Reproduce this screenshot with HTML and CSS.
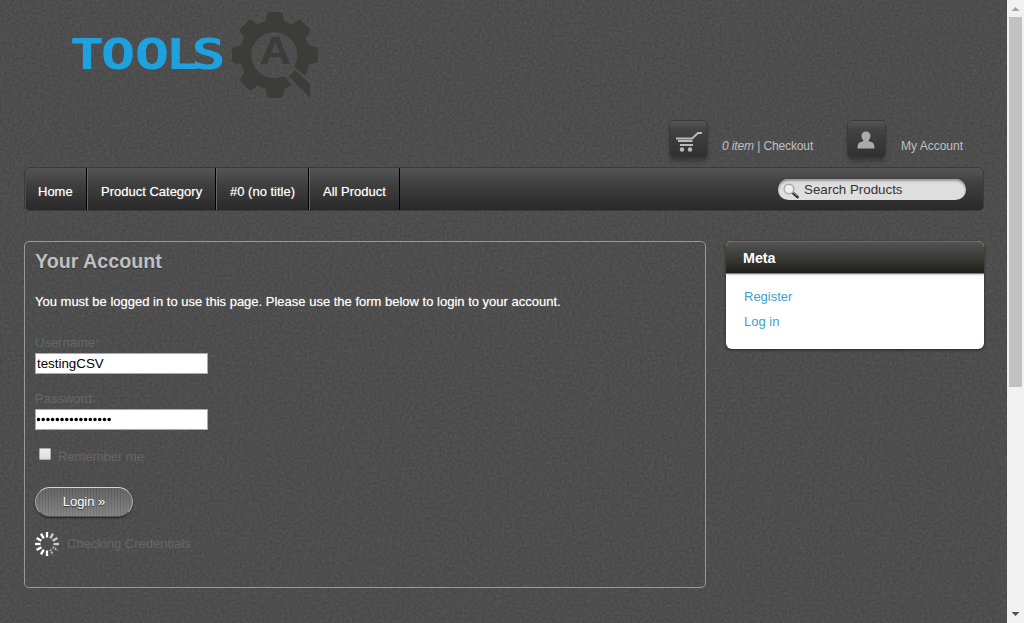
FILE: index.html
```html
<!DOCTYPE html>
<html lang="en">
<head>
<meta charset="utf-8">
<title>Your Account</title>
<link rel="stylesheet" href="styles.css">
</head>
<body>
<svg class="grain" width="1007" height="623" aria-hidden="true">
  <filter id="grain" x="0" y="0" width="100%" height="100%" color-interpolation-filters="sRGB">
    <feTurbulence type="fractalNoise" baseFrequency="0.4" numOctaves="2" seed="4"/>
    <feColorMatrix values="0.09 0 0 0 0.26  0.09 0 0 0 0.26  0.09 0 0 0 0.26  0 0 0 0 1"/>
  </filter>
  <rect width="1007" height="623" filter="url(#grain)"/>
</svg>
<div class="page">
  <header class="header">
    <svg class="logo" width="260" height="100" viewBox="64 4 260 100">
      <text class="logo-word" transform="translate(69.7 69) scale(1.35 1)" x="0 23 48.1 70.800 90" y="0">TOOLS</text>
      <g fill="#3c3c39">
        <path id="tooth" d="M265 24 L267 14 Q268 12 270 12 H280 Q282 12 283 14 L285 24Z"/>
        <use href="#tooth" transform="rotate(45 275 55)"/>
        <use href="#tooth" transform="rotate(90 275 55)"/>
        <use href="#tooth" transform="rotate(180 275 55)"/>
        <use href="#tooth" transform="rotate(225 275 55)"/>
        <use href="#tooth" transform="rotate(270 275 55)"/>
        <use href="#tooth" transform="rotate(315 275 55)"/>
        <path d="M309 62 L306 76 L294 67 A23 23 0 1 0 284 76 L292 85 Q284 90 275 90 A35 35 0 1 1 309 62Z"/>
        <path d="M295 70 L310 84 V98 L289 76Z"/>
        <text class="logo-mark" transform="translate(259.5 64) scale(1.15 1)">A</text>
      </g>
    </svg>
    <div class="tools">
      <a class="tool cart"><span class="tile"><svg width="36" height="36" viewBox="0 0 36 36"><path d="M6 17.500H22L28 12H32" fill="none" stroke="#b9b9b9" stroke-width="2"/><path d="M8 20H22.500M10 24H23" fill="none" stroke="#b9b9b9" stroke-width="2"/><circle cx="12" cy="28.500" r="2.200" fill="#b9b9b9"/><circle cx="20" cy="28.500" r="2.200" fill="#b9b9b9"/></svg></span><span class="tool-text"><em>0 item</em> | Checkout</span></a>
      <a class="tool account"><span class="tile"><svg width="36" height="36" viewBox="0 0 36 36"><path fill="#aaa" d="M18 10.500C21 10.500 22.500 12.500 22.500 15C22.500 18 20.500 19 20.500 20L24.500 21.500Q26.500 22.500 26.500 27.500H9.500Q9.500 22.500 11.500 21.500L15.500 20C15.500 19 13.500 18 13.500 15C13.500 12.500 15 10.500 18 10.500Z"/></svg></span><span class="tool-text">My Account</span></a>
    </div>
  </header>
  <nav class="nav">
    <a class="item home">Home</a><a class="item category">Product Category</a><a class="item untitled">#0 (no title)</a><a class="item all">All Product</a>
    <div class="search"><svg width="18" height="18" viewBox="0 0 18 18"><path d="M10 10L14.500 14" stroke="#333" stroke-width="3" stroke-linecap="round"/><path d="M10 9L14.500 13" stroke="#999"/><circle cx="6" cy="6" r="4.800" fill="#eee" stroke="#aaa" stroke-width="1.500"/></svg><span>Search Products</span></div>
  </nav>
  <div class="columns">
    <main class="panel">
      <h1>Your Account</h1>
      <p class="intro">You must be logged in to use this page. Please use the form below to login to your account.</p>
      <label class="label">Username:</label>
      <div class="field">testingCSV</div>
      <label class="label second">Password:</label>
      <div class="field dots"><svg width="90" height="19" viewBox="0 0 90 19"><path d="M2.500 9.500H74" stroke="#000" stroke-width="3.600" stroke-linecap="round" stroke-dasharray="0 4.710"/></svg></div>
      <div class="remember"><span class="checkbox"></span><span>Remember me</span></div>
      <a class="login">Login »</a>
      <div class="checking">
        <svg width="26" height="26" viewBox="-13 -13 26 26">
          <defs><path id="ray" d="M0-6.500V-12"/></defs>
          <g stroke="#fff" stroke-width="2.300">
            <use href="#ray"/><use href="#ray" transform="rotate(180)"/><use href="#ray" transform="rotate(210)"/><use href="#ray" transform="rotate(240)"/><use href="#ray" transform="rotate(270)"/><use href="#ray" transform="rotate(300)"/><use href="#ray" transform="rotate(330)"/>
          </g>
          <g stroke="#ccc" stroke-width="2.300"><use href="#ray" transform="rotate(30)"/><use href="#ray" transform="rotate(60)"/><use href="#ray" transform="rotate(90)"/></g>
          <g stroke="#bbb" stroke-width="2.300" stroke-dasharray="1.500 1"><use href="#ray" transform="rotate(120)"/><use href="#ray" transform="rotate(150)"/></g>
        </svg><span>Checking Credentials</span>
      </div>
    </main>
    <aside class="widget">
      <h2>Meta</h2>
      <ul><li>Register</li><li>Log in</li></ul>
    </aside>
  </div>
</div>
<div class="scrollbar">
  <svg width="17" height="17"><path d="M4.500 11L8.500 7L12.500 11Z" fill="#a3a3a3"/></svg>
  <div class="thumb"></div>
  <svg width="17" height="17"><path d="M4.500 6L8.500 10L12.500 6Z" fill="#505050"/></svg>
</div>
</body>
</html>
```

FILE: styles.css
```css
* { box-sizing: border-box; }
body {
  margin: 0;
  height: 623px;
  overflow: hidden;
  display: flex;
  background: #4d4d4d;
  color: #666;
  font: 13px/18px "Liberation Sans", Arial, sans-serif;
}
.grain { position: absolute; left: 0; top: 0; z-index: -1; }
.page { width: 1007px; padding: 0 23px 0 24px; }

.header { height: 167px; display: flex; flex-direction: column; }
.logo { margin: 4px 0 0 40px; flex: none; }
.logo-word { font: bold 42.500px "DejaVu Sans Mono", monospace; fill: #1ea2df; }
.logo-mark { font: bold 38px "Liberation Sans", Arial, sans-serif; }
.tools { display: flex; margin: 17px 0 0 646px; }
.tool { display: flex; color: #c0c0c0; font-size: 12px; }
.cart { width: 178px; }
.tile {
  width: 37px;
  height: 36px;
  flex: none;
  border-radius: 4px;
  background: linear-gradient(#555, #424242 25%, #303030);
  box-shadow: 0 0 0 1px #393939, 0 4px 4px rgba(0, 0, 0, .3);
}
.tile svg { display: block; }
.cart .tool-text { margin: 16px 0 0 15px; letter-spacing: -.12px; }
.account .tool-text { margin: 16px 0 0 16px; }

.nav {
  width: 960px;
  height: 44px;
  display: flex;
  border: 1px solid #3b3b3b;
  border-radius: 5px;
  background: linear-gradient(#555, #414141 35%, #292929);
  color: #fff;
}
.item {
  border-left: 1px solid #666;
  border-right: 1px solid #000;
  padding: 15px 0 0 13px;
  white-space: nowrap;
  text-shadow: 0 0 1px rgba(255, 255, 255, .5);
}
.home { width: 62px; padding-left: 12px; border-left-color: #4a4a4a; border-radius: 4px 0 0 4px; }
.category { width: 129px; }
.untitled { width: 93px; }
.all { width: 91px; }
.search {
  margin: 11px 17px 0 auto;
  width: 188px;
  height: 21px;
  border-radius: 11px;
  background: #dedede;
  box-shadow: inset 0 2px 2px #999;
  display: flex;
  align-items: center;
  padding-left: 5px;
  gap: 3px;
  color: #333;
  font-size: 13.333px;
}
.search svg { margin-top: 4px; }

.columns { display: flex; align-items: flex-start; gap: 20px; margin-top: 30px; }
.panel { width: 682px; height: 347px; border: 1px solid #999; border-radius: 5px; padding: 7px 10px; }
h1 { margin: 0; font-size: 19.700px; line-height: 24px; color: #c0c0c0; text-shadow: 0 1px 1px #333; }
.intro { margin: 20px 0 0; color: #fff; text-shadow: 0 0 1px rgba(255, 255, 255, .5); }
.label { display: block; margin-top: 23px; height: 19px; }
.second { margin-top: 16px; }
.field {
  width: 173px;
  height: 21px;
  border: 1px solid #aaa;
  background: #fff;
  color: #000;
  padding: 1px 1px;
  font-size: 13.333px;
}
.dots { padding: 0; }
.dots svg { display: block; }
.remember { display: flex; gap: 7px; margin: 18px 0 0 4px; }
.checkbox {
  width: 12px;
  height: 12px;
  border: 1px solid #aaa;
  border-radius: 1px;
  background: linear-gradient(#eee, #ddd);
}
.login {
  display: flex;
  align-items: center;
  justify-content: center;
  width: 98px;
  height: 30px;
  margin-top: 21px;
  border: 1px solid #aaa;
  border-top-color: #d5d5d5;
  border-bottom-color: #555;
  border-radius: 15px;
  color: #fff;
  background: repeating-linear-gradient(90deg, rgba(0, 0, 0, .1) 0 1px, transparent 1px 3px), linear-gradient(#656565, #858585);
  box-shadow: 0 1px 2px #222;
  text-shadow: 0 1px 1px #333;
}
.checking { display: flex; align-items: center; gap: 7px; margin: 14px 0 0 -1px; }

.widget {
  width: 258px;
  height: 108px;
  border-radius: 6px;
  overflow: hidden;
  background: #fff;
  box-shadow: 0 1px 3px #222;
}
h2 {
  margin: 0;
  height: 33px;
  padding: 7px 17px;
  border-top: 1px solid #6a6a6a;
  border-bottom: 1px solid #777;
  background: linear-gradient(#535353, #20201b);
  color: #fff;
  font-size: 14.300px;
  line-height: 18px;
  box-shadow: 0 1px 2px #ccc;
}
ul { margin: 0; padding: 10px 18px; list-style: none; color: #3f9fcb; line-height: 25px; }

.scrollbar { width: 17px; flex: none; background: #f1f1f1; display: flex; flex-direction: column; align-items: center; }
.scrollbar svg:last-child { margin-top: auto; }
.thumb { width: 13px; height: 370px; background: #c1c1c1; }
```
